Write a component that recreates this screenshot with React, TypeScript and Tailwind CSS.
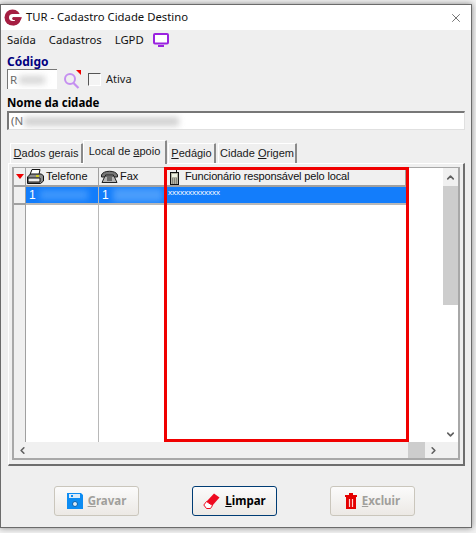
import type { ReactNode } from 'react';
import { ChevronDown, ChevronLeft, ChevronRight, ChevronUp, X } from 'lucide-react';

const uiFont = "font-['Noto_Sans',sans-serif]";
const gridFont = "font-['Liberation_Sans',sans-serif]";

function Logo() {
  return (
    <svg width="18" height="17" viewBox="0 0 18 17" className="shrink-0">
      <circle cx="8.500" cy="8.500" r="8" fill="#a51e42" />
      <path d="M18 5H8.500C6.300 5 5 6.500 5 8.500S6.300 12 8.500 12H11V10.800H9C7.800 10.800 7.800 8.300 9 8.300H18z" fill="#fff" />
      <path d="M9 8.300H18L15.500 13.500C14 15.500 12 16.500 9 16.500L11 11H9z" fill="#a51e42" />
    </svg>
  );
}

function Monitor() {
  return (
    <svg width="16" height="14" viewBox="0 0 16 14" className="ml-[9px]">
      <rect x="1" y="1" width="14" height="9.500" rx="1" fill="#fff" stroke="#9a22e0" strokeWidth="2" />
      <path d="M5 13h6" stroke="#9a22e0" strokeWidth="2" />
    </svg>
  );
}

function Search() {
  return (
    <svg width="18" height="21" viewBox="0 0 18 21" className="ml-[6px]">
      <circle cx="7" cy="10" r="5" fill="none" stroke="#c58ff0" strokeWidth="2" />
      <path d="M10.500 14l5 5" stroke="#c58ff0" strokeWidth="2.200" />
      <path d="M13 1h5v5z" fill="#f00000" />
    </svg>
  );
}

function Printer() {
  return (
    <svg width="17" height="15" viewBox="0 0 17 15" className="shrink-0">
      <path d="M5 0.500h8l-1 5H3z" fill="#fff" stroke="#111" />
      <path d="M0.500 8l3-3h11l2 2v5l-3 2.500H0.500z" fill="#8c8c8c" stroke="#111" />
      <path d="M1 9h12v4H1z" fill="#ededed" stroke="#111" />
      <path d="M9 7h3" stroke="#e8e000" strokeWidth="1.500" />
    </svg>
  );
}

function Fax() {
  return (
    <svg width="17" height="13" viewBox="0 0 17 13" className="shrink-0">
      <path d="M0.500 5C2 0 15 0 16.500 5v2h-4V5h-8v2h-4z" fill="#777" stroke="#222" />
      <path d="M4 6h9l3 6.500H1z" fill="#b5b5b5" stroke="#222" />
      <path d="M6 8h5M6 10h5" stroke="#222" />
    </svg>
  );
}

function Mobile() {
  return (
    <svg width="9" height="16" viewBox="0 0 9 16" className="shrink-0">
      <rect x="0.500" y="3.500" width="8" height="12" fill="#b4b4a4" stroke="#111" />
      <path d="M2 5h5v3H2z" fill="#eef2e2" />
      <path d="M2 10h5M2 12h5M2 14h5" stroke="#555" strokeDasharray="1 1" />
      <path d="M6.500 0v3.500" stroke="#111" />
    </svg>
  );
}

function Floppy() {
  return (
    <svg width="16" height="16" viewBox="0 0 16 16" className="shrink-0">
      <path d="M0 0h14l2 2v14H0z" fill="#0d8cf2" />
      <rect x="2" y="1" width="11" height="4" fill="#dcebf8" />
      <rect x="4" y="2" width="2" height="2" fill="#0d8cf2" />
      <circle cx="8" cy="11" r="2.500" fill="#dcebf8" stroke="#0b5fa8" />
    </svg>
  );
}

function Eraser() {
  return (
    <svg width="17" height="16" viewBox="0 0 17 16" className="shrink-0">
      <path d="M11 0.500l5.500 4-7 8-6-4z" fill="#ee0a1f" />
      <path d="M3.500 8.500l6 4-2 3H3.500L0.800 12z" fill="#fff" stroke="#ee0a1f" />
    </svg>
  );
}

function Trash() {
  return (
    <svg width="12" height="16" viewBox="0 0 12 16" className="shrink-0">
      <path d="M0 2h12v2H0zM4 0h4v2H4z" fill="#e40000" />
      <path d="M1 4h10v12H1z" fill="#e40000" />
      <path d="M4.500 6v8M7.500 6v8" stroke="#ffd0d0" strokeWidth="1.200" />
    </svg>
  );
}

function Tab({ children, active = false, className }: { children: ReactNode; active?: boolean; className: string }) {
  return (
    <div
      className={`${gridFont} ${className} flex items-center justify-center rounded-t-[1px] border-t border-r-2 border-l border-t-white border-r-[#8a8a8a] border-l-white bg-[#efefef] text-[11px] text-[#1a1a1a] ${
        active ? 'relative z-10 -mb-[1px] h-[24px] pb-[3px]' : 'h-[20px]'
      }`}
    >
      {children}
    </div>
  );
}

function HeaderCell({ className, children }: { className: string; children?: ReactNode }) {
  return (
    <div className={`${className} flex h-[19px] items-center border-r border-b-2 border-r-[#a0a0a0] border-b-[#a0a0a0] bg-[#f0f0f0]`}>
      {children}
    </div>
  );
}

function ActionButton({ children, focused = false }: { children: ReactNode; focused?: boolean }) {
  return (
    <div
      className={`flex h-[30px] w-[85px] items-center justify-center gap-[5px] rounded-[3px] border bg-gradient-to-b from-[#fbfbfb] to-[#ece9e5] text-[11.500px] font-bold ${
        focused ? 'border-[#003c74] text-black' : 'border-[#cac6bc] text-[#a09f9b]'
      }`}
    >
      {children}
    </div>
  );
}

export default function App() {
  return (
    <div className={`${uiFont} h-[533px] w-[476px] overflow-hidden bg-[#f2f2f2] pt-[4px] pr-[4px]`}>
      <div className="flex h-[524px] w-[472px] flex-col border border-[#6b6b6b] bg-[#efefef] shadow-[0_0_6px_rgba(0,0,0,0.45)]">
        <div className="flex h-[25px] shrink-0 items-center bg-white pl-[3px]">
          <Logo />
          <span className="ml-[4px] text-[11.300px] text-[#111]">TUR - Cadastro Cidade Destino</span>
          <X className="mr-[8px] ml-auto text-[#111]" size={14} strokeWidth={1} />
        </div>
        <div className="flex h-[20px] shrink-0 items-center gap-[13px] pl-[6px] text-[11.300px] text-[#111]">
          <span>Saída</span>
          <span>Cadastros</span>
          <div className="flex items-center">
            <span>LGPD</span>
            <Monitor />
          </div>
        </div>

        <div className="flex shrink-0 flex-col pt-[4px] pl-[6px]">
          <div className="h-[15px] text-[12px] leading-[15px] font-bold text-[#000080]">Código</div>
          <div className="flex h-[20px] items-center">
            <div className="flex h-[20px] w-[50px] items-center overflow-hidden border-t border-l border-t-[#777] border-l-[#777] bg-white pl-[2px] text-[11.500px] text-[#666]">
              R<span className="ml-[2px] h-[8px] w-[26px] bg-[#d5d5d5] blur-[3px]" />
            </div>
            <Search />
            <div className="ml-[7px] h-[13px] w-[13px] border border-t-[#555] border-r-white border-b-white border-l-[#555] bg-[#f4f4f4]" />
            <span className="ml-[5px] text-[11px] text-[#222]">Ativa</span>
          </div>
          <div className="mt-[5px] h-[17px] text-[11.500px] leading-[17px] font-bold text-black">Nome da cidade</div>
          <div className="flex h-[19px] w-[458px] items-center overflow-hidden border-t-2 border-r border-b border-l-2 border-t-[#777] border-r-[#e0e0e0] border-b-[#e0e0e0] border-l-[#777] bg-white pl-[2px] text-[11.500px] text-[#666]">
            (N<span className="ml-[1px] h-[9px] w-[155px] bg-[#d0d0d0] blur-[3px]" />
          </div>
        </div>

        <div className="mt-[10px] ml-[9px] flex h-[23px] shrink-0 items-end">
          <Tab className="w-[73px]">
            <span className="underline">D</span>ados gerais
          </Tab>
          <Tab active className="w-[84px]">
            Local de&nbsp;<span className="underline">a</span>poio
          </Tab>
          <Tab className="ml-[1px] w-[48px]">
            <span className="underline">P</span>edágio
          </Tab>
          <Tab className="ml-[2px] w-[79px]">
            Cidade&nbsp;<span className="underline">O</span>rigem
          </Tab>
        </div>

        <div className={`${gridFont} relative ml-[7px] flex h-[303px] w-[457px] shrink-0 flex-col border-t border-r-2 border-b-2 border-l border-t-white border-r-[#6e6e6e] border-b-[#6e6e6e] border-l-white pt-[3px] pr-[3px] pb-[4px] pl-[3px]`}>
          <div className="flex flex-1 flex-col overflow-hidden border-x-2 border-t border-b-2 border-[#a8a8a8] bg-white">
            <div className="flex min-h-0 flex-1">
              <div className="flex min-w-0 flex-1 flex-col">
                <div className="flex shrink-0 text-[11px] text-[#111]">
                  <HeaderCell className="w-[12px] justify-center">
                    <span className="h-0 w-0 border-x-[4px] border-t-[5px] border-x-transparent border-t-[#f00000]" />
                  </HeaderCell>
                  <HeaderCell className="w-[73px] gap-[2px] pl-[1px]">
                    <Printer />
                    <span>Telefone</span>
                  </HeaderCell>
                  <HeaderCell className="w-[66px] gap-[2px] pl-[2px]">
                    <Fax />
                    <span>Fax</span>
                  </HeaderCell>
                  <HeaderCell className="w-[241px] gap-[6px] pl-[5px]">
                    <Mobile />
                    <span className="tracking-[-0.15px]">Funcionário responsável pelo local</span>
                  </HeaderCell>
                </div>
                <div className="flex h-[18px] shrink-0 text-[12px] text-white">
                  <div className="w-[12px] border-r border-b-2 border-[#a0a0a0] bg-[#f0f0f0]" />
                  <div className="flex w-[73px] items-center overflow-hidden border-r border-b-2 border-[#b8b8b8] bg-[#137dfb] pl-[3px]">
                    1<span className="ml-[4px] h-[10px] w-[48px] bg-[#3f97fc] blur-[3px]" />
                  </div>
                  <div className="flex w-[66px] items-center overflow-hidden border-r border-b-2 border-[#b8b8b8] bg-[#137dfb] pl-[3px]">
                    1<span className="ml-[4px] h-[14px] w-[50px] bg-[#4a9dfc] blur-[3px]" />
                  </div>
                  <div className="flex w-[241px] items-start border-b-2 border-[#b8b8b8] bg-[#137dfb] pl-[3px] text-[8px] leading-[12px]">xxxxxxxxxxxxx</div>
                </div>
                <div className="flex min-h-0 flex-1">
                  <div className="w-[12px] border-r border-[#a0a0a0] bg-[#f0f0f0]" />
                  <div className="w-[73px] border-r border-[#b8b8b8]" />
                  <div className="w-[66px] border-r border-[#b8b8b8]" />
                </div>
              </div>
              <div className="flex w-[15px] shrink-0 flex-col">
                <div className="flex h-[18px] items-center justify-center bg-[#f0f0f0]">
                  <ChevronUp size={11} strokeWidth={3.5} className="text-[#606060]" />
                </div>
                <div className="h-[119px] bg-[#cdcdcd]" />
                <div className="flex-1 bg-white" />
                <div className="flex h-[16px] items-center justify-center bg-white">
                  <ChevronDown size={11} strokeWidth={3.5} className="text-[#606060]" />
                </div>
              </div>
            </div>
            <div className="flex h-[16px] shrink-0 items-center bg-[#f0f0f0]">
              <ChevronLeft size={11} strokeWidth={3.5} className="ml-[3px] text-[#606060]" />
              <div className="mr-[3px] ml-auto h-full w-[17px] bg-[#cdcdcd]" />
              <ChevronRight size={11} strokeWidth={3.5} className="mr-[19px] text-[#606060]" />
            </div>
          </div>
          {/* marcacao vermelha por cima do grid */}
          <div className="absolute top-[3px] left-[155px] h-[275px] w-[245px] border-[3px] border-[#f00000]" />
        </div>

        <div className="flex flex-1 items-start gap-[53px] pt-[20px] pl-[53px]">
          <ActionButton>
            <Floppy />
            <span>
              <span className="underline">G</span>ravar
            </span>
          </ActionButton>
          <ActionButton focused>
            <Eraser />
            <span>
              <span className="underline">L</span>impar
            </span>
          </ActionButton>
          <ActionButton>
            <Trash />
            <span>
              <span className="underline">E</span>xcluir
            </span>
          </ActionButton>
        </div>
      </div>
    </div>
  );
}
